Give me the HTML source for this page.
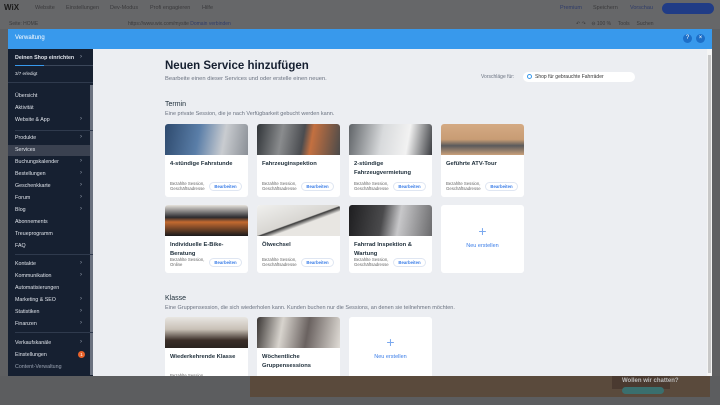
<!DOCTYPE html><html><head><meta charset="utf-8"><style>
*{margin:0;padding:0;box-sizing:border-box}
body{width:720px;height:405px;overflow:hidden;background:#5f6062;font-family:"Liberation Sans",sans-serif;position:relative}
.a{position:absolute;white-space:nowrap}
.top{left:0;top:0;width:720px;height:29px;background:#666769}
.tt{font-size:5.5px;color:#3a3a3c}
.modal{left:8px;top:29px;width:704px;height:347px;background:#eceef2}
.hdr{left:0;top:0;width:704px;height:20px;background:#3899ec}
.side{left:0;top:20px;width:85px;height:327px;background:#162031}
.si{font-size:5.3px;color:#dfe3ea;left:7px}
.chev{font-size:6px;color:#9aa3b2;left:72px}
.dv{left:7px;width:78px;height:1px;background:#2f3a4d}
.card{position:absolute;width:83px;background:#fff;border-radius:3px;overflow:hidden}
.img{height:31px}
.ct{font-size:5.8px;font-weight:bold;color:#20303c;margin:5px 0 0 5px;line-height:8.5px;width:75px}
.cm{position:absolute;left:5px;bottom:6px;font-size:4.3px;color:#666;line-height:5px}
.bt{position:absolute;right:6px;bottom:6px;width:33px;height:9px;border:1px solid #dfe6f2;border-radius:5px;font-size:4.3px;color:#3a7de8;text-align:center;line-height:8px;font-weight:bold}
.sec{font-size:7px;color:#20303c}
.sd{font-size:5.5px;color:#6a7280}
</style></head><body>
<div class="a top"></div>
<div class="a" style="left:4px;top:3px;font-size:8px;font-weight:bold;color:#1a1a1a">WiX</div>
<div class="a tt" style="left:35px;top:5px">Website</div>
<div class="a tt" style="left:66px;top:5px">Einstellungen</div>
<div class="a tt" style="left:110px;top:5px">Dev-Modus</div>
<div class="a tt" style="left:150px;top:5px">Profi engagieren</div>
<div class="a tt" style="left:202px;top:5px">Hilfe</div>
<div class="a tt" style="left:560px;top:5px;color:#2f3c6a">Premium</div>
<div class="a tt" style="left:593px;top:5px">Speichern</div>
<div class="a tt" style="left:630px;top:5px;color:#2f3c6a">Vorschau</div>
<div class="a" style="left:662px;top:3px;width:52px;height:11px;border-radius:6px;background:#203c86"></div>
<div class="a tt" style="left:9px;top:21px;font-size:5px">Seite: HOME</div>
<div class="a tt" style="left:128px;top:21px;font-size:5px">https://www.wix.com/mysite <span style="color:#2f3c6a">Domain verbinden</span></div>
<div class="a tt" style="left:576px;top:21px;font-size:5px">↶ ↷ &nbsp;&nbsp; ⊖ 100 % &nbsp;&nbsp;&nbsp; Tools &nbsp;&nbsp;&nbsp; Suchen</div>
<div class="a" style="left:0;top:376px;width:720px;height:29px;background:#5c5d5f"></div>
<div class="a" style="left:250px;top:376px;width:460px;height:21px;background:#5a4a3c"></div>
<div class="a" style="left:612px;top:376px;width:58px;height:13px;background:#4a3a30;color:#bbb;font-size:6px;padding:2px 0 0 10px;font-weight:bold">Wollen wir chatten?</div>
<div class="a" style="left:622px;top:387px;width:42px;height:7px;border-radius:4px;background:#3a6f6e"></div>

<div class="a modal">
 <div class="a hdr"></div>
 <div class="a" style="left:7px;top:6px;font-size:6px;color:#fff">Verwaltung</div>
 <div class="a" style="left:675px;top:5px;width:9px;height:9px;border-radius:50%;background:#1d6fc8;color:#fff;font-size:6px;text-align:center;line-height:9px">?</div>
 <div class="a" style="left:688px;top:5px;width:9px;height:9px;border-radius:50%;background:#1d6fc8;color:#fff;font-size:6px;text-align:center;line-height:9px">×</div>
 <div class="a" style="left:699px;top:20px;width:5px;height:327px;background:#f4f4f4"></div>
 <div class="a" style="left:700px;top:26px;width:3px;height:318px;background:#c8c8c8"></div>
 <div class="a side">
  <div class="a si" style="top:6px;font-weight:bold">Deinen Shop einrichten</div><div class="a chev" style="top:5px;left:72px">›</div>
  <div class="a" style="left:7px;top:16px;width:78px;height:1px;background:#3b475a"></div>
  <div class="a" style="left:7px;top:16px;width:29px;height:1px;background:#3899ec"></div>
  <div class="a si" style="top:22px;font-size:4.5px">3/7 erledigt</div>
  <div class="a dv" style="top:33px;left:0;width:85px"></div>
  <div class="a" style="left:82px;top:36px;width:3px;height:290px;background:#6b7280"></div>
  <div class="a" style="left:0;top:96px;width:82px;height:11px;background:#3a4150"></div>
 </div>
</div>
<div class="a" style="left:8px;top:29px">
<div class="a si" style="top:64px">Übersicht</div>
<div class="a si" style="top:76px">Aktivität</div>
<div class="a si" style="top:88px">Website &amp; App</div><div class="a chev" style="top:87px">›</div>
<div class="a dv" style="top:101px"></div>
<div class="a si" style="top:106px">Produkte</div><div class="a chev" style="top:105px">›</div>
<div class="a si" style="top:118px">Services</div>
<div class="a si" style="top:130px">Buchungskalender</div><div class="a chev" style="top:129px">›</div>
<div class="a si" style="top:142px">Bestellungen</div><div class="a chev" style="top:141px">›</div>
<div class="a si" style="top:154px">Geschenkkarte</div><div class="a chev" style="top:153px">›</div>
<div class="a si" style="top:166px">Forum</div><div class="a chev" style="top:165px">›</div>
<div class="a si" style="top:178px">Blog</div><div class="a chev" style="top:177px">›</div>
<div class="a si" style="top:190px">Abonnements</div>
<div class="a si" style="top:202px">Treueprogramm</div>
<div class="a si" style="top:214px">FAQ</div>
<div class="a dv" style="top:225px"></div>
<div class="a si" style="top:232px">Kontakte</div><div class="a chev" style="top:231px">›</div>
<div class="a si" style="top:244px">Kommunikation</div><div class="a chev" style="top:243px">›</div>
<div class="a si" style="top:256px">Automatisierungen</div>
<div class="a si" style="top:268px">Marketing &amp; SEO</div><div class="a chev" style="top:267px">›</div>
<div class="a si" style="top:280px">Statistiken</div><div class="a chev" style="top:279px">›</div>
<div class="a si" style="top:292px">Finanzen</div><div class="a chev" style="top:291px">›</div>
<div class="a dv" style="top:303px"></div>
<div class="a si" style="top:311px">Verkaufskanäle</div><div class="a chev" style="top:310px">›</div>
<div class="a si" style="top:323px">Einstellungen</div>
<div class="a" style="left:70px;top:322px;width:7px;height:7px;border-radius:50%;background:#e8622a;color:#fff;font-size:4.5px;text-align:center;line-height:7px">1</div>
<div class="a si" style="top:335px;color:#9aa3b2">Content-Verwaltung</div>
</div>

<div class="a" style="left:165px;top:60px;font-size:11.5px;font-weight:bold;color:#162031">Neuen Service hinzufügen</div>
<div class="a sd" style="left:165px;top:76px;font-size:5.8px">Bearbeite einen dieser Services und oder erstelle einen neuen.</div>
<div class="a sd" style="left:481px;top:74px;font-size:5px">Vorschläge für:</div>
<div class="a" style="left:523px;top:72px;width:112px;height:10px;background:#fff;border-radius:5px;font-size:5px;color:#333;padding:2px 0 0 12px">Shop für gebrauchte Fahrräder</div>
<div class="a" style="left:527px;top:74px;width:5px;height:5px;border:1px solid #3899ec;border-radius:50%"></div>
<div class="a sec" style="left:165px;top:101px">Termin</div>
<div class="a sd" style="left:165px;top:111px">Eine private Session, die je nach Verfügbarkeit gebucht werden kann.</div>

<div class="card" style="left:165px;top:124px;height:73px"><div class="img" style="background:linear-gradient(100deg,#2e4a6e,#5a7ea8 40%,#c9ccd0 70%,#8a8f96)"></div><div class="ct">4-stündige Fahrstunde</div><div class="cm">Bezahlte Session,<br>Geschäftsadresse</div><div class="bt">Bearbeiten</div></div>
<div class="card" style="left:257px;top:124px;height:73px"><div class="img" style="background:linear-gradient(100deg,#303438,#8a8c8e 30%,#4a4c50 55%,#c47040 65%,#4a4a4a)"></div><div class="ct">Fahrzeuginspektion</div><div class="cm">Bezahlte Session,<br>Geschäftsadresse</div><div class="bt">Bearbeiten</div></div>
<div class="card" style="left:349px;top:124px;height:73px"><div class="img" style="background:linear-gradient(100deg,#606468,#d8dadc 40%,#f2f2f2 70%,#3a3c40)"></div><div class="ct">2-stündige Fahrzeugvermietung</div><div class="cm">Bezahlte Session,<br>Geschäftsadresse</div><div class="bt">Bearbeiten</div></div>
<div class="card" style="left:441px;top:124px;height:73px"><div class="img" style="background:linear-gradient(180deg,#d4aa84,#c89c74 50%,#5a5a5c 70%,#c9a07a)"></div><div class="ct">Geführte ATV-Tour</div><div class="cm">Bezahlte Session,<br>Geschäftsadresse</div><div class="bt">Bearbeiten</div></div>

<div class="card" style="left:165px;top:205px;height:68px"><div class="img" style="background:linear-gradient(180deg,#e6e2dc,#2a2a2e 40%,#c46a30 55%,#1a1a1c)"></div><div class="ct">Individuelle E-Bike-Beratung</div><div class="cm">Bezahlte Session,<br>Online</div><div class="bt">Bearbeiten</div></div>
<div class="card" style="left:257px;top:205px;height:68px"><div class="img" style="background:linear-gradient(160deg,#f0f0ee,#d8d6d2 50%,#3a3a3a 52%,#e8e6e2 60%)"></div><div class="ct">Ölwechsel</div><div class="cm">Bezahlte Session,<br>Geschäftsadresse</div><div class="bt">Bearbeiten</div></div>
<div class="card" style="left:349px;top:205px;height:68px"><div class="img" style="background:linear-gradient(100deg,#1e1e20,#4a4a4c 40%,#c8c8ca 60%,#6a6a6c)"></div><div class="ct">Fahrrad Inspektion &amp; Wartung</div><div class="cm">Bezahlte Session,<br>Geschäftsadresse</div><div class="bt">Bearbeiten</div></div>
<div class="card" style="left:441px;top:205px;height:68px"><div style="position:absolute;left:0;width:83px;top:18px;text-align:center;font-size:14px;color:#7aa8ee;font-weight:300">+</div><div style="position:absolute;left:0;width:83px;top:38px;text-align:center;font-size:5.5px;color:#3a7de8">Neu erstellen</div></div>

<div class="a sec" style="left:165px;top:295px">Klasse</div>
<div class="a sd" style="left:165px;top:305px">Eine Gruppensession, die sich wiederholen kann. Kunden buchen nur die Sessions, an denen sie teilnehmen möchten.</div>
<div class="card" style="left:165px;top:317px;height:59px;border-radius:3px 3px 0 0"><div class="img" style="background:linear-gradient(180deg,#e8e6e2,#c8c0b6 40%,#3a2e28 75%,#2a2420)"></div><div class="ct">Wiederkehrende Klasse</div><div class="cm" style="bottom:-2px">Bezahlte Session</div></div>
<div class="card" style="left:257px;top:317px;height:59px;border-radius:3px 3px 0 0"><div class="img" style="background:linear-gradient(100deg,#3a3634,#d8d4ce 30%,#6a6260 60%,#e0dcd6)"></div><div class="ct">Wöchentliche Gruppensessions</div></div>
<div class="card" style="left:349px;top:317px;height:59px;border-radius:3px 3px 0 0"><div style="position:absolute;left:0;width:83px;top:17px;text-align:center;font-size:14px;color:#7aa8ee">+</div><div style="position:absolute;left:0;width:83px;top:37px;text-align:center;font-size:5.5px;color:#3a7de8">Neu erstellen</div></div>
</body></html>
